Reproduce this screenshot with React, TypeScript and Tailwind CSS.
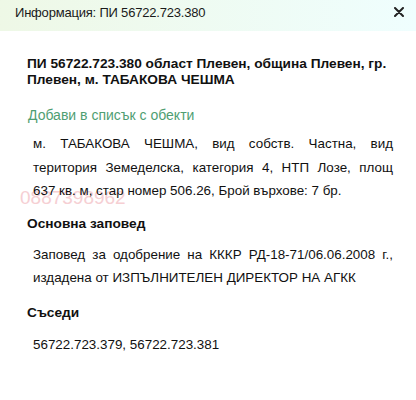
import React from "react";

export default function App() {
  return (
    <div className="w-[416px] h-[400px] bg-white overflow-hidden relative text-[#111]" style={{ fontFamily: '"Liberation Sans", Arial, sans-serif' }}>
      <div className="absolute left-[20px] top-[188px] text-[19px] leading-[19px] text-[#f4c4c9] opacity-80 pointer-events-none">0887398962</div>
      <div className="relative h-[31px] flex items-center justify-between pl-[15px] pr-[12px] bg-gradient-to-r from-[#eef8e6] to-[#effefe]">
        <span className="text-[13px] tracking-[-0.2px] text-[#1a1a1a] leading-none mb-[6px]">Информация: ПИ 56722.723.380</span>
        <svg width="10" height="10" viewBox="0 0 10 10" className="mb-[7px]">
          <path d="M1 1L9 9M9 1L1 9" stroke="#222" strokeWidth="2" strokeLinecap="round" />
        </svg>
      </div>
      <div className="relative pl-[27px] pr-[23px]">
        <h1 className="mt-[25px] text-[13.7px] font-bold leading-[16px]">
          ПИ 56722.723.380 област Плевен, община Плевен, гр. Плевен, м. ТАБАКОВА ЧЕШМА
        </h1>
        <div className="mt-[18px] text-[14px] text-[#4f9e72] leading-[18px] pl-[1px]">Добави в списък с обекти</div>
        <div className="mt-[8px] pl-[6px] text-[13.4px] leading-[23.5px]">
          <span className="block [text-align-last:justify] text-justify whitespace-nowrap">м. ТАБАКОВА ЧЕШМА, вид собств. Частна, вид</span>
          <span className="block [text-align-last:justify] text-justify whitespace-nowrap">територия Земеделска, категория 4, НТП Лозе, площ</span>
          <span className="block whitespace-nowrap">637 кв. м, стар номер 506.26, Брой върхове: 7 бр.</span>
        </div>
        <h2 className="mt-[13px] text-[13.7px] font-bold leading-[16px]">Основна заповед</h2>
        <div className="mt-[11px] pl-[6px] text-[13.4px] leading-[23.5px]">
          <span className="block [text-align-last:justify] text-justify whitespace-nowrap">Заповед за одобрение на КККР РД-18-71/06.06.2008 г.,</span>
          <span className="block whitespace-nowrap">издадена от ИЗПЪЛНИТЕЛЕН ДИРЕКТОР НА АГКК</span>
        </div>
        <h2 className="mt-[15px] text-[13.7px] font-bold leading-[16px]">Съседи</h2>
        <p className="mt-[12px] pl-[6px] text-[13.4px] leading-[23.5px]">56722.723.379, 56722.723.381</p>
      </div>
    </div>
  );
}
